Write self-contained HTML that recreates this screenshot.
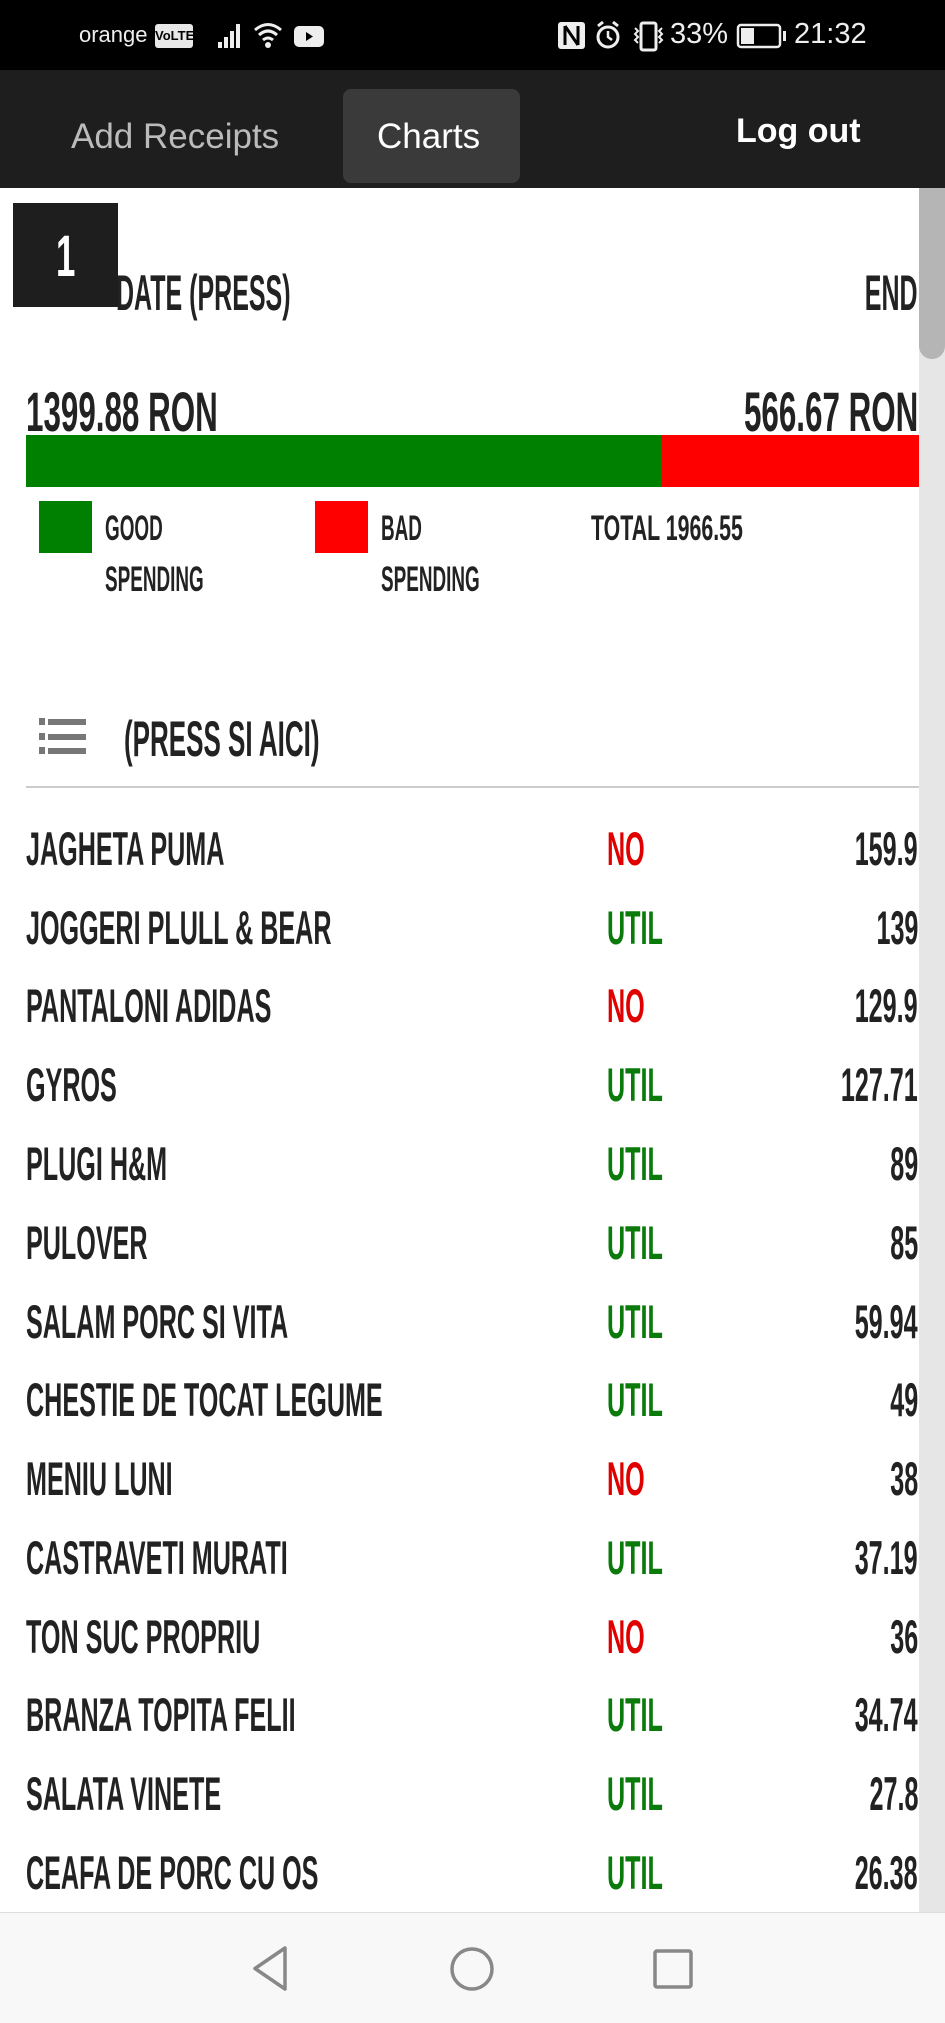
<!DOCTYPE html>
<html><head><meta charset="utf-8">
<style>
*{margin:0;padding:0;box-sizing:border-box}
body{width:945px;height:2023px;position:relative;overflow:hidden;background:#fff;font-family:"Liberation Sans",sans-serif}
.a{position:absolute;white-space:nowrap}
.n{font-family:"Liberation Sans Narrow","Liberation Sans",sans-serif;color:#222;line-height:1;font-weight:bold}
.l{transform-origin:left center}
.r{transform-origin:right center}
.row{font-size:47px;transform:scaleX(.535)}
</style></head><body>
<!-- status bar -->
<div class="a" style="left:0;top:0;width:945px;height:70px;background:#000"></div>
<div class="a" style="left:79px;top:22px;color:#eee;font-size:22px">orange</div>
<div class="a" style="left:155px;top:24px;width:38px;height:24px;background:#e8e8e8;border-radius:3px;color:#000;font-size:13px;font-weight:bold;text-align:center;line-height:24px">VoLTE</div>
<svg class="a" style="left:215px;top:20px" width="110" height="30" viewBox="0 0 110 30">
<g fill="#eee"><rect x="3" y="22" width="4" height="6"/><rect x="9" y="17" width="4" height="11"/><rect x="15" y="11" width="4" height="17"/><rect x="21" y="4" width="4" height="24"/></g>
<g fill="none" stroke="#eee" stroke-width="3"><path d="M40 10 Q53 -1 66 10"/><path d="M44 15 Q53 7 62 15"/><path d="M48 20 Q53 16 58 20"/></g>
<circle cx="53" cy="25" r="3" fill="#eee"/>
<rect x="79" y="6" width="30" height="21" rx="5" fill="#eee"/><path d="M91 12 L98 16.5 L91 21Z" fill="#000"/>
</svg>
<svg class="a" style="left:555px;top:18px" width="240" height="34" viewBox="0 0 240 34">
<rect x="3" y="4" width="27" height="27" rx="3" fill="#eee"/><path d="M10 8 V27 M10 8 L23 27 M23 8 V27" stroke="#000" stroke-width="3" fill="none"/>
<circle cx="53" cy="19" r="10" fill="none" stroke="#eee" stroke-width="3"/><path d="M53 13 V19 L57 22" stroke="#eee" stroke-width="2.5" fill="none"/><path d="M43 8 L48 4 M63 8 L58 4" stroke="#eee" stroke-width="3"/>
<rect x="86" y="5" width="15" height="27" rx="2" fill="none" stroke="#eee" stroke-width="3"/><path d="M80 10 l3 3 -3 3 3 3 -3 3 3 3 M107 10 l-3 3 3 3 -3 3 3 3 -3 3" stroke="#eee" stroke-width="2" fill="none"/>
<rect x="183" y="7" width="42" height="22" rx="3" fill="none" stroke="#eee" stroke-width="2.5"/><rect x="186" y="10" width="13" height="16" fill="#eee"/><rect x="228" y="13" width="3" height="10" fill="#eee"/>
</svg>
<div class="a" style="left:670px;top:18px;color:#eee;font-size:29px">33%</div>
<div class="a" style="left:794px;top:18px;color:#eee;font-size:29px">21:32</div>
<!-- nav -->
<div class="a" style="left:0;top:70px;width:945px;height:118px;background:#1e1e1e"></div>
<div class="a" style="left:343px;top:89px;width:177px;height:94px;background:#3a3a3a;border-radius:8px"></div>
<div class="a" style="left:71px;top:117px;color:#bbb;font-size:35px">Add Receipts</div>
<div class="a" style="left:377px;top:117px;color:#fff;font-size:35px">Charts</div>
<div class="a" style="left:736px;top:112px;color:#fff;font-size:34px;font-weight:bold">Log out</div>
<!-- scrollbar -->
<div class="a" style="left:919px;top:188px;width:26px;height:1725px;background:#e6e6e6"></div>
<div class="a" style="left:919px;top:188px;width:26px;height:171px;background:#b5b5b5;border-radius:0 0 13px 13px"></div>
<!-- header -->
<div class="a n l" style="left:116px;top:268px;font-size:50px;transform:scaleX(.5)">DATE (PRESS)</div>
<div class="a n r" style="right:27px;top:268px;font-size:50px;transform:scaleX(.5)">END</div>
<div class="a" style="left:13px;top:203px;width:105px;height:104px;background:#1e1e1e"></div>
<div class="a n l" style="left:56px;top:228px;font-size:58px;color:#fff;transform:scaleX(.6)">1</div>
<div class="a n l" style="left:26px;top:384px;font-size:56px;transform:scaleX(.56)">1399.88 RON</div>
<div class="a n r" style="right:27px;top:384px;font-size:56px;transform:scaleX(.56)">566.67 RON</div>
<div class="a" style="left:26px;top:435px;width:635px;height:52px;background:#008000"></div>
<div class="a" style="left:661px;top:435px;width:258px;height:52px;background:#ff0000"></div>
<div class="a" style="left:39px;top:501px;width:53px;height:52px;background:#008000"></div>
<div class="a" style="left:315px;top:501px;width:53px;height:52px;background:#ff0000"></div>
<div class="a n l" style="left:105px;top:511px;font-size:35px;transform:scaleX(.54)">GOOD</div>
<div class="a n l" style="left:105px;top:562px;font-size:35px;transform:scaleX(.54)">SPENDING</div>
<div class="a n l" style="left:381px;top:511px;font-size:35px;transform:scaleX(.54)">BAD</div>
<div class="a n l" style="left:381px;top:562px;font-size:35px;transform:scaleX(.54)">SPENDING</div>
<div class="a n l" style="left:591px;top:511px;font-size:35px;transform:scaleX(.61)">TOTAL 1966.55</div>
<!-- list icon -->
<svg class="a" style="left:39px;top:716px" width="48" height="40" viewBox="0 0 48 40"><g fill="#777"><rect x="0" y="2" width="6" height="7"/><rect x="9" y="3" width="38" height="6"/><rect x="0" y="17" width="6" height="7"/><rect x="9" y="18" width="38" height="6"/><rect x="0" y="31" width="6" height="7"/><rect x="9" y="32" width="38" height="6"/></g></svg>
<div class="a n l" style="left:124px;top:714px;font-size:50px;transform:scaleX(.52)">(PRESS SI AICI)</div>
<div class="a" style="left:26px;top:786px;width:893px;height:2px;background:#ccc"></div>
<!-- rows -->
<div class="a n l row" style="left:26px;top:825px">JAGHETA PUMA</div><div class="a n l row" style="left:607px;top:825px;color:#e00000">NO</div><div class="a n r row" style="right:27px;top:825px">159.9</div>
<div class="a n l row" style="left:26px;top:904px">JOGGERI PLULL &amp; BEAR</div><div class="a n l row" style="left:607px;top:904px;color:#0a7a0a">UTIL</div><div class="a n r row" style="right:27px;top:904px">139</div>
<div class="a n l row" style="left:26px;top:982px">PANTALONI ADIDAS</div><div class="a n l row" style="left:607px;top:982px;color:#e00000">NO</div><div class="a n r row" style="right:27px;top:982px">129.9</div>
<div class="a n l row" style="left:26px;top:1061px">GYROS</div><div class="a n l row" style="left:607px;top:1061px;color:#0a7a0a">UTIL</div><div class="a n r row" style="right:27px;top:1061px">127.71</div>
<div class="a n l row" style="left:26px;top:1140px">PLUGI H&amp;M</div><div class="a n l row" style="left:607px;top:1140px;color:#0a7a0a">UTIL</div><div class="a n r row" style="right:27px;top:1140px">89</div>
<div class="a n l row" style="left:26px;top:1219px">PULOVER</div><div class="a n l row" style="left:607px;top:1219px;color:#0a7a0a">UTIL</div><div class="a n r row" style="right:27px;top:1219px">85</div>
<div class="a n l row" style="left:26px;top:1298px">SALAM PORC SI VITA</div><div class="a n l row" style="left:607px;top:1298px;color:#0a7a0a">UTIL</div><div class="a n r row" style="right:27px;top:1298px">59.94</div>
<div class="a n l row" style="left:26px;top:1376px">CHESTIE DE TOCAT LEGUME</div><div class="a n l row" style="left:607px;top:1376px;color:#0a7a0a">UTIL</div><div class="a n r row" style="right:27px;top:1376px">49</div>
<div class="a n l row" style="left:26px;top:1455px">MENIU LUNI</div><div class="a n l row" style="left:607px;top:1455px;color:#e00000">NO</div><div class="a n r row" style="right:27px;top:1455px">38</div>
<div class="a n l row" style="left:26px;top:1534px">CASTRAVETI MURATI</div><div class="a n l row" style="left:607px;top:1534px;color:#0a7a0a">UTIL</div><div class="a n r row" style="right:27px;top:1534px">37.19</div>
<div class="a n l row" style="left:26px;top:1613px">TON SUC PROPRIU</div><div class="a n l row" style="left:607px;top:1613px;color:#e00000">NO</div><div class="a n r row" style="right:27px;top:1613px">36</div>
<div class="a n l row" style="left:26px;top:1691px">BRANZA TOPITA FELII</div><div class="a n l row" style="left:607px;top:1691px;color:#0a7a0a">UTIL</div><div class="a n r row" style="right:27px;top:1691px">34.74</div>
<div class="a n l row" style="left:26px;top:1770px">SALATA VINETE</div><div class="a n l row" style="left:607px;top:1770px;color:#0a7a0a">UTIL</div><div class="a n r row" style="right:27px;top:1770px">27.8</div>
<div class="a n l row" style="left:26px;top:1849px">CEAFA DE PORC CU OS</div><div class="a n l row" style="left:607px;top:1849px;color:#0a7a0a">UTIL</div><div class="a n r row" style="right:27px;top:1849px">26.38</div>
<!-- bottom nav -->
<div class="a" style="left:0;top:1912px;width:945px;height:111px;background:#f8f8f8;border-top:1px solid #ddd"></div>
<svg class="a" style="left:0;top:1912px" width="945" height="111" viewBox="0 0 945 111">
<g fill="none" stroke="#888" stroke-width="3.5" stroke-linejoin="round">
<path d="M285 36 V77 L255 56.5 Z"/>
<circle cx="472" cy="57" r="20"/>
<rect x="655" y="39" width="36" height="36" rx="2"/>
</g></svg>
</body></html>
